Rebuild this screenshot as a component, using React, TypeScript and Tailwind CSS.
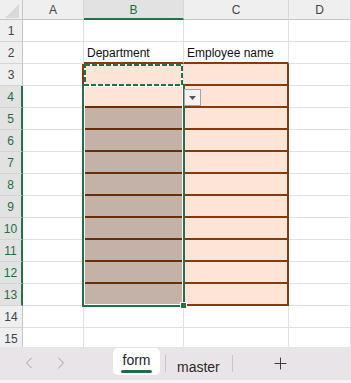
import React from "react";
import { ChevronLeft, ChevronRight, Plus } from "lucide-react";

const rows = Array.from({ length: 15 }, (_, i) => i + 1);

function cellClass(r: number, c: number): string {
  let cls = "h-[22px] flex items-end pl-[3px] pb-[2px] text-[12px] leading-[14px] text-[#111] whitespace-nowrap overflow-visible ";
  if ((c === 1 || c === 2) && r >= 2 && r <= 13) {
    if (c === 1 && r >= 4 && r <= 12) cls += "border-b-2 border-b-[#672f09] ";
    else cls += "border-b-2 border-b-[#843c0c] ";
  } else cls += "border-b border-b-[#e1e1e1] ";
  if ((c === 0 || c === 2) && r >= 3 && r <= 13) cls += "border-r-2 border-r-[#843c0c] ";
  else cls += "border-r border-r-[#e1e1e1] ";
  if (c === 1 && r >= 5 && r <= 13) cls += "bg-[#c4b1a7]";
  else if ((c === 1 || c === 2) && r >= 3 && r <= 13) cls += "bg-[#fce4d6]";
  else cls += "bg-white";
  return cls;
}

function rowHeadClass(r: number): string {
  const base = "h-[22px] flex items-center justify-center text-[12px] leading-none border-b border-b-[#d4d4d4] ";
  if (r >= 4 && r <= 13) return base + "bg-[#e2e2e2] text-[#1f6e43] border-r-2 border-r-[#217346]";
  return base + "bg-[#efefef] text-[#444] border-r border-r-[#c6c6c6]";
}

function cellText(r: number, c: number): string {
  if (r === 2 && c === 1) return "Department";
  if (r === 2 && c === 2) return "Employee name";
  return "";
}

export default function App() {
  return (
    <div className="relative w-[351px] h-[383px] overflow-hidden bg-white font-['Liberation_Sans',Arial,sans-serif] flex flex-col">
      <div className="h-[347px] overflow-hidden shrink-0">
        <div className="grid grid-cols-[23px_61px_100px_105px_62px]">
          {/* header row */}
          <div className="h-[20px] bg-[#efefef] border-r border-r-[#c6c6c6] border-b border-b-[#c6c6c6] relative">
            <svg width="22" height="19" className="absolute left-0 top-0">
              <polygon points="19,4 19,18 5,18" fill="#d9d9d9" />
            </svg>
          </div>
          <div className="h-[20px] bg-[#efefef] border-r border-r-[#d9d9d9] border-b border-b-[#c6c6c6] flex items-center justify-center text-[12px] text-[#444] leading-none">A</div>
          <div className="h-[20px] bg-[#e2e2e2] border-r border-r-[#d9d9d9] border-b-2 border-b-[#217346] flex items-center justify-center text-[12px] text-[#1f6e43] leading-none pt-[1px]">B</div>
          <div className="h-[20px] bg-[#efefef] border-r border-r-[#d9d9d9] border-b border-b-[#c6c6c6] flex items-center justify-center text-[12px] text-[#444] leading-none">C</div>
          <div className="h-[20px] bg-[#efefef] border-r border-r-[#d9d9d9] border-b border-b-[#c6c6c6] flex items-center justify-center text-[12px] text-[#444] leading-none">D</div>
          {rows.map((r) => (
            <React.Fragment key={r}>
              <div className={rowHeadClass(r)}>{r}</div>
              {[0, 1, 2, 3].map((c) => (
                <div key={c} className={cellClass(r, c)}>
                  {cellText(r, c)}
                </div>
              ))}
            </React.Fragment>
          ))}
        </div>
      </div>

      {/* tab bar */}
      <div className="h-[33px] bg-[#e9e4e8] flex items-start shrink-0">
        <div className="w-[13px]" />
        <div className="w-[32px] h-[33px] flex items-center justify-center pb-[1px]">
          <ChevronLeft size={20} strokeWidth={1.2} color="#a3a0a3" />
        </div>
        <div className="w-[32px] h-[33px] flex items-center justify-center pb-[1px]">
          <ChevronRight size={20} strokeWidth={1.2} color="#a3a0a3" />
        </div>
        <div className="w-[36px]" />
        <div className="mt-[1px] w-[47px] h-[27px] bg-white rounded-[5px] flex flex-col items-center pt-[4px]">
          <span className="text-[14px] leading-[17px] text-[#242424]">form</span>
          <div className="mt-[1px] w-[31px] h-[3px] rounded-full bg-[#1d7044]" />
        </div>
        <div className="ml-[5px] mt-[8px] w-px h-[17px] bg-[#cbc7ca]" />
        <div className="pl-[11px] pr-[12px] pt-[8px]">
          <span className="text-[14px] leading-[17px] text-[#2a2a2a]">master</span>
        </div>
        <div className="mt-[8px] w-px h-[17px] bg-[#cbc7ca]" />
        <div className="w-[96px] h-[33px] flex items-center justify-center pb-[1px]">
          <Plus size={19} strokeWidth={1.2} color="#333" />
        </div>
      </div>
      <div className="h-[3px] bg-[#f5f5f5] shrink-0" />

      {/* selection overlay B4:B13 */}
      <div className="absolute left-[82px] top-[84px] w-[103px] h-[223px] border-2 border-[#217346] pointer-events-none">
        <div className="absolute inset-0 border border-white" />
      </div>
      {/* copy marquee around B3 */}
      <svg className="absolute left-[82px] top-[62px]" width="103" height="25">
        <rect x="3" y="3" width="97" height="20" fill="none" stroke="#ffffff" strokeWidth="2" />
        <rect x="3" y="3" width="97" height="20" fill="none" stroke="#217346" strokeWidth="2" strokeDasharray="5 2" />
      </svg>
      {/* fill handle */}
      <div className="absolute left-[180px] top-[302px] w-[7px] h-[7px] bg-[#217346] border border-white" />
      {/* dropdown button */}
      <div className="absolute left-[184px] top-[89px] w-[17px] h-[17px] bg-[#f3f3f3] border border-[#a6a6a6] flex items-center justify-center">
        <svg width="7" height="4" viewBox="0 0 7 4">
          <polygon points="0,0 7,0 3.5,4" fill="#555" />
        </svg>
      </div>
    </div>
  );
}
